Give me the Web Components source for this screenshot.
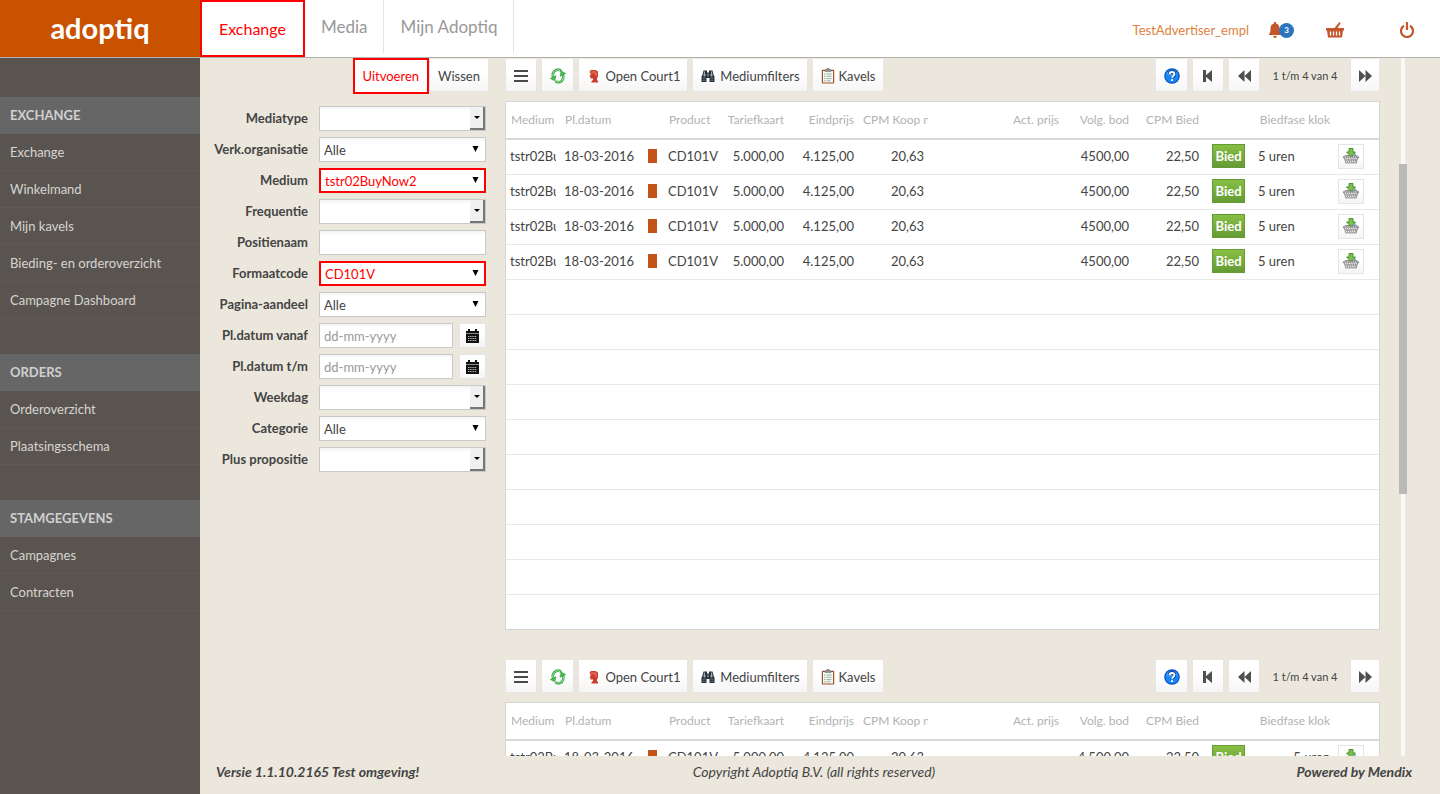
<!DOCTYPE html>
<html lang="nl">
<head>
<meta charset="utf-8">
<title>Adoptiq Exchange</title>
<style>
html, body { margin: 0; height: 100%; }
body { font: 13px/18px Lato, "Open Sans", sans-serif; color: #444; background: #ebe7dc; }
</style>
</head>
<body>
<ad-app></ad-app>
<script>
const ICONS = {
  menu: ['0 0 14 12', '<path d="M0 1h14M0 6h14M0 11h14" stroke="#4a4a4a" stroke-width="2"/>'],
  refresh: ['0 0 16 16', '<g transform="rotate(-25 8 8)"><path d="M3 8.500C3 4 5.500 1.800 9 1.800c2 0 3.200 1 4 3" fill="none" stroke="#35a043" stroke-width="2.600"/><path d="M3 8C3.200 4.500 5.500 2 9 2c1.500 0 2.600.8 3.400 2" fill="none" stroke="#93ea93" stroke-width="1"/><path d="M0 7h6.200L3 11z" fill="#45c14f" stroke="#2a8c36" stroke-width=".5"/><path d="M13 8c0 4-2.500 6.200-5.500 6.200-2 0-3.200-1-4-2.500" fill="none" stroke="#35a043" stroke-width="2.600"/><path d="M13 8.500c-.2 3.500-2.500 5.500-5.500 5.500-1.500 0-2.600-.8-3.400-1.800" fill="none" stroke="#93ea93" stroke-width="1"/><path d="M9.800 9H16l-3-4.200z" fill="#45c14f" stroke="#2a8c36" stroke-width=".5"/></g>'],
  head: ['0 0 16 16', '<path d="M5 3l1-1h4.500L13 3.500V9l-1 1v2l1 1v1.500H6.500V13L8 12v-1.500H5.500V9l-1-.5L5.500 7V5L4.500 4.500z" fill="#cb3d2e"/><path d="M6 3h4.500L12 5v3.500L10.500 8 9 5.500H6z" fill="#dc604c"/>'],
  binoculars: ['0 0 16 16', '<path d="M3.500 2.500h3.500v2h2v-2h3.500l.5 2.500 1.500 4v5H9.500v-4h-3v4h-5V9L3 5z" fill="#27303b"/><path d="M2.700 9.500h2.800v3.500H2.700zM10.500 9.500h2.800v3.500h-2.800z" fill="#6f8090"/><path d="M4.500 3.500v5M11.500 3.500v5M8 5.500v3M3 7h3M10 7h3" stroke="#aeb9c4" stroke-width=".9"/><path d="M4.100 9.500v3.500M11.900 9.500v3.500M2 11.300h4M10 11.300h4" stroke="#1d242c" stroke-width=".7"/>'],
  clipboard: ['0 0 14 16', '<rect x=".8" y="1.800" width="12.400" height="13.700" rx="1" fill="#a3532a"/><rect x="2" y="3" width="10" height="11.500" fill="#f4f8f6"/><path d="M4 3.500V1.800h1.500L6 .3h2l.5 1.500H10v1.700z" fill="#8a949c" stroke="#5e666e" stroke-width=".5"/><path d="M5.500 6h5M5.500 8.300h5M5.500 10.600h5M5.500 12.800h4" stroke="#8fa79b" stroke-width=".9"/><path d="M3.300 6h1M3.300 8.300h1M3.300 10.600h1M3.300 12.800h1" stroke="#4e9b6f"/>'],
  help: ['0 0 16 16', '<circle cx="8" cy="8" r="7.800" fill="#0a4fc0"/><circle cx="8" cy="8" r="6.600" fill="#1687f5"/><path d="M2.300 6.500a5.900 5.900 0 0 1 11.400 0q-5 2.500-11.400 0" fill="#5cb6ff" opacity=".6"/><path d="M5.500 6.200C5.500 3 10.700 3 10.700 6c0 1.900-2.500 1.800-2.500 4" fill="none" stroke="#0a4098" stroke-width="3.400"/><path d="M5.600 6.200C5.600 3.300 10.500 3.300 10.500 6c0 1.900-2.400 1.700-2.400 3.800M8.100 11.200v1.800" fill="none" stroke="#fff" stroke-width="1.900"/>'],
  first: ['0 0 10 12', '<path d="M0 0h3v12H0zM9 0v12L2 6z" fill="#4f4f4f"/>'],
  prev: ['0 0 13 12', '<path d="M6.500 0v12L0 6zM13 0v12L6.500 6z" fill="#4f4f4f"/>'],
  next: ['0 0 13 12', '<path d="M0 0v12l6.500-6zM6.500 0v12L13 6z" fill="#4f4f4f"/>'],
  calendar: ['0 0 13 14', '<path d="M0 2h2V0h2v2h5V0h2v2h2v12H0z" fill="#111"/><path d="M0 4.500h13" stroke="#8b8b8b"/><path d="M2 7.500h9M2 9.500h9M2 11.500h9" stroke="#ddd" stroke-width=".8" stroke-dasharray="1.400 .8"/>'],
  addBasket: ['0 0 16 16', '<path d="M0 8.500l3-1.500h10l3 1.500V10l-1 .5-1.500 5h-11L1 10.500 0 10z" fill="#8a8a8a"/><path d="M1.500 9h13M2 10.500h12M2.300 12h11.400M2.800 13.500h10.400M3.200 15h9.600" stroke="#f0f0f0" stroke-width="1" stroke-dasharray="1.300 .8"/><path d="M11 4l2 2.500-2 2z" fill="#6aa5d8"/><path d="M6 .5h4V4h2.500L8 8.500 3.500 4H6z" fill="#7cbf4a" stroke="#3f8a28" stroke-width=".9"/>'],
  bell: ['0 0 12 16', '<path d="M5 0h2v1.500c2.500.5 3.500 2.500 3.500 5 0 3 .5 4.500 1.500 5.500v1H0v-1c1-1 1.500-2.500 1.500-5.500 0-2.500 1-4.500 3.500-5zM4 14h4q-.5 2-2 2t-2-2z" fill="#c4562a"/>'],
  basket: ['0 0 18 16', '<path d="M0 6h8.500L13 .6q1.400-.8 1.600.7L11.500 6H18v2.500h-1L16 15.500H2L1 8.500H0z" fill="#c4562a"/><path d="M4.500 9.500v4M7.500 9.500v4M10.500 9.500v4M13.500 9.500v4" stroke="#fff" stroke-width="1.300"/>'],
  power: ['0 0 14 16', '<path d="M4 3.800a6 6 0 1 0 6 0" fill="none" stroke="#c4562a" stroke-width="2.200"/><path d="M7 0v8" stroke="#c4562a" stroke-width="2.200"/>'],
  dropdown: ['0 0 7 6', '<path d="M.5 0h6l-3 6z" fill="#000"/>'],
  comboArrow: ['0 0 6 3', '<path d="M0 0h6L3 3z" fill="#000"/>']
};

function define(name, render) {
  customElements.define(name, class extends HTMLElement {
    connectedCallback() {
      if (this.shadowRoot) return;
      const t = document.createElement('template');
      t.innerHTML = render(this);
      this.attachShadow({ mode: 'open' }).append(t.content.cloneNode(true));
    }
  });
}

define('ad-icon', el => {
  const [box, body] = ICONS[el.getAttribute('name')];
  const [, , w, h] = box.split(' ');
  return `<style>:host{display:inline-flex;flex:none}svg{display:block}</style>
  <svg width="${w}" height="${h}" viewBox="${box}" aria-hidden="true">${body}</svg>`;
});

define('ad-button', el => `<style>
:host{display:block}
button{display:flex;align-items:center;justify-content:center;gap:4px;box-sizing:border-box;width:100%;height:33px;margin:0;padding:0 var(--pad,8px);
 border:1px solid #e6e5e4;border-top-color:#fff;background:linear-gradient(#fff 40%,#f5f5f6);font:inherit;color:inherit;white-space:nowrap}
:host([small]) button{height:25px;padding:0;border-color:#e4e4e4}
:host([active]) button{height:36px;border:2px solid #f00;color:#f00;background:#fff}
</style><button type="button" ${el.title ? `aria-label="${el.title}"` : ''}><slot></slot></button>`);

define('ad-tab', () => `<style>
:host{display:block;height:53px;border-right:1px solid #e4e4e4}
a{display:flex;align-items:center;box-sizing:border-box;height:100%;padding:0 16px;color:#999;text-decoration:none;font-size:17px;line-height:24px}
:host([active]){height:57px;border:0}
:host([active]) a{padding:0 17px;border:2px solid #f00;color:#f00;font-size:16px}
</style><a href="#"><slot></slot></a>`);

define('ad-header', () => `<style>
:host{display:flex;height:57px;background:#fff;border-bottom:1px solid #b3b3ad}
.logo{width:200px;height:57px;background:#c85200;color:#fff;font:700 29px/56px Lato,sans-serif;text-align:center}
nav{display:flex;flex:1}
.user{display:flex;align-items:center;height:60px;padding-right:26px}
.user a{color:#e0813f;text-decoration:none;display:flex;align-items:center}
.bell{margin-left:20px}
.user .badge{width:15px;height:15px;border-radius:8px;background:#2a75bb;color:#fff;font-size:8px;font-weight:700;line-height:15px;text-align:center;margin-left:-2px}
.cart{margin-left:32px}.off{margin-left:56px}
</style>
<div class="logo">adoptiq</div>
<nav><ad-tab active>Exchange</ad-tab><ad-tab>Media</ad-tab><ad-tab>Mijn Adoptiq</ad-tab></nav>
<div class="user"><a href="#">TestAdvertiser_empl</a>
<a class="bell" href="#"><ad-icon name="bell"></ad-icon><span class="badge">3</span></a>
<a class="cart" href="#" aria-label="Winkelmand"><ad-icon name="basket"></ad-icon></a>
<a class="off" href="#" aria-label="Uitloggen"><ad-icon name="power"></ad-icon></a></div>`);

define('ad-menu-group', el => `<style>
:host{display:block;margin-bottom:35px}
h2{margin:0;padding:0 10px;background:#666;color:#d0d0d0;font-size:13px;font-weight:700;line-height:37px;text-transform:uppercase}
ul{margin:0;padding:0;list-style:none}
a{display:block;padding:0 10px;border-bottom:1px solid #5f5a56;color:#d6d4d2;line-height:36px;text-decoration:none}
</style><h2>${el.getAttribute('heading')}</h2>
<ul>${el.getAttribute('items').split('|').map(i => `<li><a href="#">${i}</a></li>`).join('')}</ul>`);

define('ad-sidebar', () => `<style>
:host{display:block;box-sizing:border-box;padding-top:39px;background:#59544f}
</style>
<ad-menu-group heading="Exchange" items="Exchange|Winkelmand|Mijn kavels|Bieding- en orderoverzicht|Campagne Dashboard"></ad-menu-group>
<ad-menu-group heading="Orders" items="Orderoverzicht|Plaatsingsschema"></ad-menu-group>
<ad-menu-group heading="Stamgegevens" items="Campagnes|Contracten"></ad-menu-group>`);

define('ad-field', el => {
  const kind = el.getAttribute('kind'), value = el.getAttribute('value') || '';
  const control = {
    text: '<input id="f" type="text">',
    date: '<input id="f" type="text" placeholder="dd-mm-yyyy"><ad-button small title="Kies datum"><ad-icon name="calendar"></ad-icon></ad-button>',
    select: `<select id="f"><option>${value}</option></select><ad-icon class="arrow" name="dropdown"></ad-icon>`,
    combo: '<select id="f"><option></option></select><span class="arrow bevel"><ad-icon name="comboArrow"></ad-icon></span>'
  }[kind];
  return `<style>
:host{display:grid;grid-template-columns:108px 1fr;column-gap:11px;align-items:center}
label{text-align:right;font-weight:700;white-space:nowrap;padding-bottom:2px}
.box{position:relative;display:flex;gap:6px;min-width:0}
input,select{appearance:none;box-sizing:border-box;flex:1;min-width:0;height:25px;margin:0;padding:0 4px;border:1px solid #c9c9c9;border-radius:0;
 background:linear-gradient(#f4f4f4,#fff 4px);font:inherit;color:inherit}
input::placeholder{color:#999;opacity:1}
ad-button{width:27px}
.arrow{position:absolute;right:7px;top:9px;pointer-events:none}
.bevel{right:1px;top:1px;display:flex;align-items:center;justify-content:center;box-sizing:border-box;width:15px;height:23px;background:#f0f0f0;border:solid #777;border-width:0 2px 2px 0}
:host([active]) select{border:2px solid #f00;color:#f00;background:#fff;padding-top:1px}
</style><label for="f">${el.getAttribute('label')}</label><div class="box">${control}</div>`;
});

define('ad-filters', () => `<style>
:host{display:block}
.actions{display:flex;justify-content:flex-end;margin-right:-3px;height:36px}
.actions ad-button{margin-top:1px}.actions ad-button[active]{margin-top:0}
form{display:grid;row-gap:6px;margin-top:12px}
</style>
<div class="actions"><ad-button active>Uitvoeren</ad-button><ad-button>Wissen</ad-button></div>
<form>
<ad-field label="Mediatype" kind="combo"></ad-field>
<ad-field label="Verk.organisatie" kind="select" value="Alle"></ad-field>
<ad-field label="Medium" kind="select" value="tstr02BuyNow2" active></ad-field>
<ad-field label="Frequentie" kind="combo"></ad-field>
<ad-field label="Positienaam" kind="text"></ad-field>
<ad-field label="Formaatcode" kind="select" value="CD101V" active></ad-field>
<ad-field label="Pagina-aandeel" kind="select" value="Alle"></ad-field>
<ad-field label="Pl.datum vanaf" kind="date"></ad-field>
<ad-field label="Pl.datum t/m" kind="date"></ad-field>
<ad-field label="Weekdag" kind="combo"></ad-field>
<ad-field label="Categorie" kind="select" value="Alle"></ad-field>
<ad-field label="Plus propositie" kind="combo"></ad-field>
</form>`);

define('ad-toolbar', () => `<style>
:host{display:flex;gap:4px;--pad:6px}
.icon{width:32px;--pad:0px}
.court{min-width:110px}.filters{min-width:116px}.lots{min-width:72px}
.help{width:33px}.next{width:30px}
.space{flex:1}
.count{align-self:center;width:82px;text-align:center;font-size:11px;white-space:nowrap}
</style>
<ad-button class="icon" title="Menu"><ad-icon name="menu"></ad-icon></ad-button>
<ad-button class="icon help" title="Vernieuwen"><ad-icon name="refresh"></ad-icon></ad-button>
<ad-button class="court"><ad-icon name="head"></ad-icon>Open Court1</ad-button>
<ad-button class="filters"><ad-icon name="binoculars"></ad-icon>Mediumfilters</ad-button>
<ad-button class="lots"><ad-icon name="clipboard"></ad-icon>Kavels</ad-button>
<span class="space"></span>
<ad-button class="icon help" title="Help"><ad-icon name="help"></ad-icon></ad-button>
<ad-button class="icon" title="Eerste"><ad-icon name="first"></ad-icon></ad-button>
<ad-button class="icon" title="Vorige"><ad-icon name="prev"></ad-icon></ad-button>
<span class="count">1 t/m 4 van 4</span>
<ad-button class="icon next" title="Volgende"><ad-icon name="next"></ad-icon></ad-button>`);

define('ad-lots', el => {
  const bid = el.getAttribute('bid');
  const heads = ['Medium', 'Pl.datum', '', 'Product', 'r:Tariefkaart', 'r:Eindprijs', 'CPM Koop n', '', 'r:Act. prijs', 'r:Volg. bod', 'r:CPM Bied', '', 'r:Biedfase klok', '']
    .map(h => h.startsWith('r:') ? `<th class="r">${h.slice(2)}</th>` : `<th><span class="clip">${h}</span></th>`).join('');
  const row = `<tr><td><span class="clip">tstr02Bu</span></td><td>18-03-2016</td><td><i></i></td><td>CD101V</td><td class="r">5.000,00</td><td class="r">4.125,00</td><td class="r">20,63</td><td></td><td></td>
<td class="r">${bid}</td><td class="r">22,50</td><td><button class="bid" type="button">Bied</button></td><td class="clock">5 uren</td><td><ad-button small title="In winkelmand"><ad-icon name="addBasket"></ad-icon></ad-button></td></tr>`;
  const empty = `<tr>${'<td></td>'.repeat(14)}</tr>`;
  const cols = [54, 80, 24, 54, 70, 70, 70, 0, 70, 70, 70, 47, 84, 45].map(w => `<col${w ? ` style="width:${w}px"` : ''}>`).join('');
  return `<style>
:host{display:block;border:1px solid #d5d5d5;background:#fff}
table{width:100%;table-layout:fixed;border-collapse:separate;border-spacing:0}
th,td{box-sizing:border-box;padding:0 4px;text-align:left;white-space:nowrap}
th{height:38px;border-bottom:2px solid #d9d9d9;color:#b3b3b3;font-weight:400;font-size:12px;padding:0 4px 1px 5px}
th:nth-child(7){padding-right:0}
td{height:35px;border-bottom:1px solid #e8e8e8;padding-bottom:2px}
.clip{display:block;overflow:hidden}
tr:last-child td{height:34px;border-bottom:0}
.r{text-align:right}
i{display:block;width:9px;height:14px;margin-left:4px;background:#c4531a}
.bid{display:block;box-sizing:border-box;width:33px;height:24px;margin-left:5px;padding:0;border:1px solid #649c34;background:linear-gradient(#87bf45,#659b34);color:#fff;font:700 13px/20px Lato,sans-serif}
.clock{padding-left:8px}
:host([late]) .clock{text-align:right}
td ad-button{width:26px}
</style><table><colgroup>${cols}</colgroup><thead><tr>${heads}</tr></thead><tbody>${row.repeat(4)}${empty.repeat(10)}</tbody></table>`;
});

define('ad-app', () => `<style>
:host{display:grid;grid-template:auto minmax(0,1fr) / 200px minmax(0,1fr);height:100vh;overflow:hidden}
ad-header{grid-column:1 / -1}
.page{display:flex;flex-direction:column;min-width:0;min-height:0}
main{flex:1;min-height:0;overflow:hidden;display:grid;grid-template-columns:286px minmax(0,1fr) 8px;padding-right:33px}
.grids{display:flex;flex-direction:column;padding:1px 19px 0 19px}
ad-toolbar{margin-bottom:9px}
ad-lots{margin-bottom:30px}
.scroll{background:linear-gradient(90deg,transparent 2px,#f8f8f8 2px 6px,transparent 6px)}
.thumb{width:8px;height:330px;margin-top:106px;background:#b9b9b9}
footer{display:grid;grid-template-columns:1fr auto 1fr;padding:0 28px 0 16px;height:38px;font-size:14px;line-height:32px;font-style:italic}
footer b:last-child{text-align:right}
</style>
<ad-header></ad-header>
<ad-sidebar></ad-sidebar>
<div class="page">
<main>
<ad-filters></ad-filters>
<div class="grids">
<ad-toolbar></ad-toolbar><ad-lots bid="4500,00"></ad-lots>
<ad-toolbar></ad-toolbar><ad-lots bid="4.500,00" late></ad-lots>
</div>
<div class="scroll"><div class="thumb"></div></div>
</main>
<footer><b>Versie 1.1.10.2165 Test omgeving!</b><span>Copyright Adoptiq B.V. (all rights reserved)</span><b>Powered by Mendix</b></footer>
</div>`);
</script>
</body>
</html>
